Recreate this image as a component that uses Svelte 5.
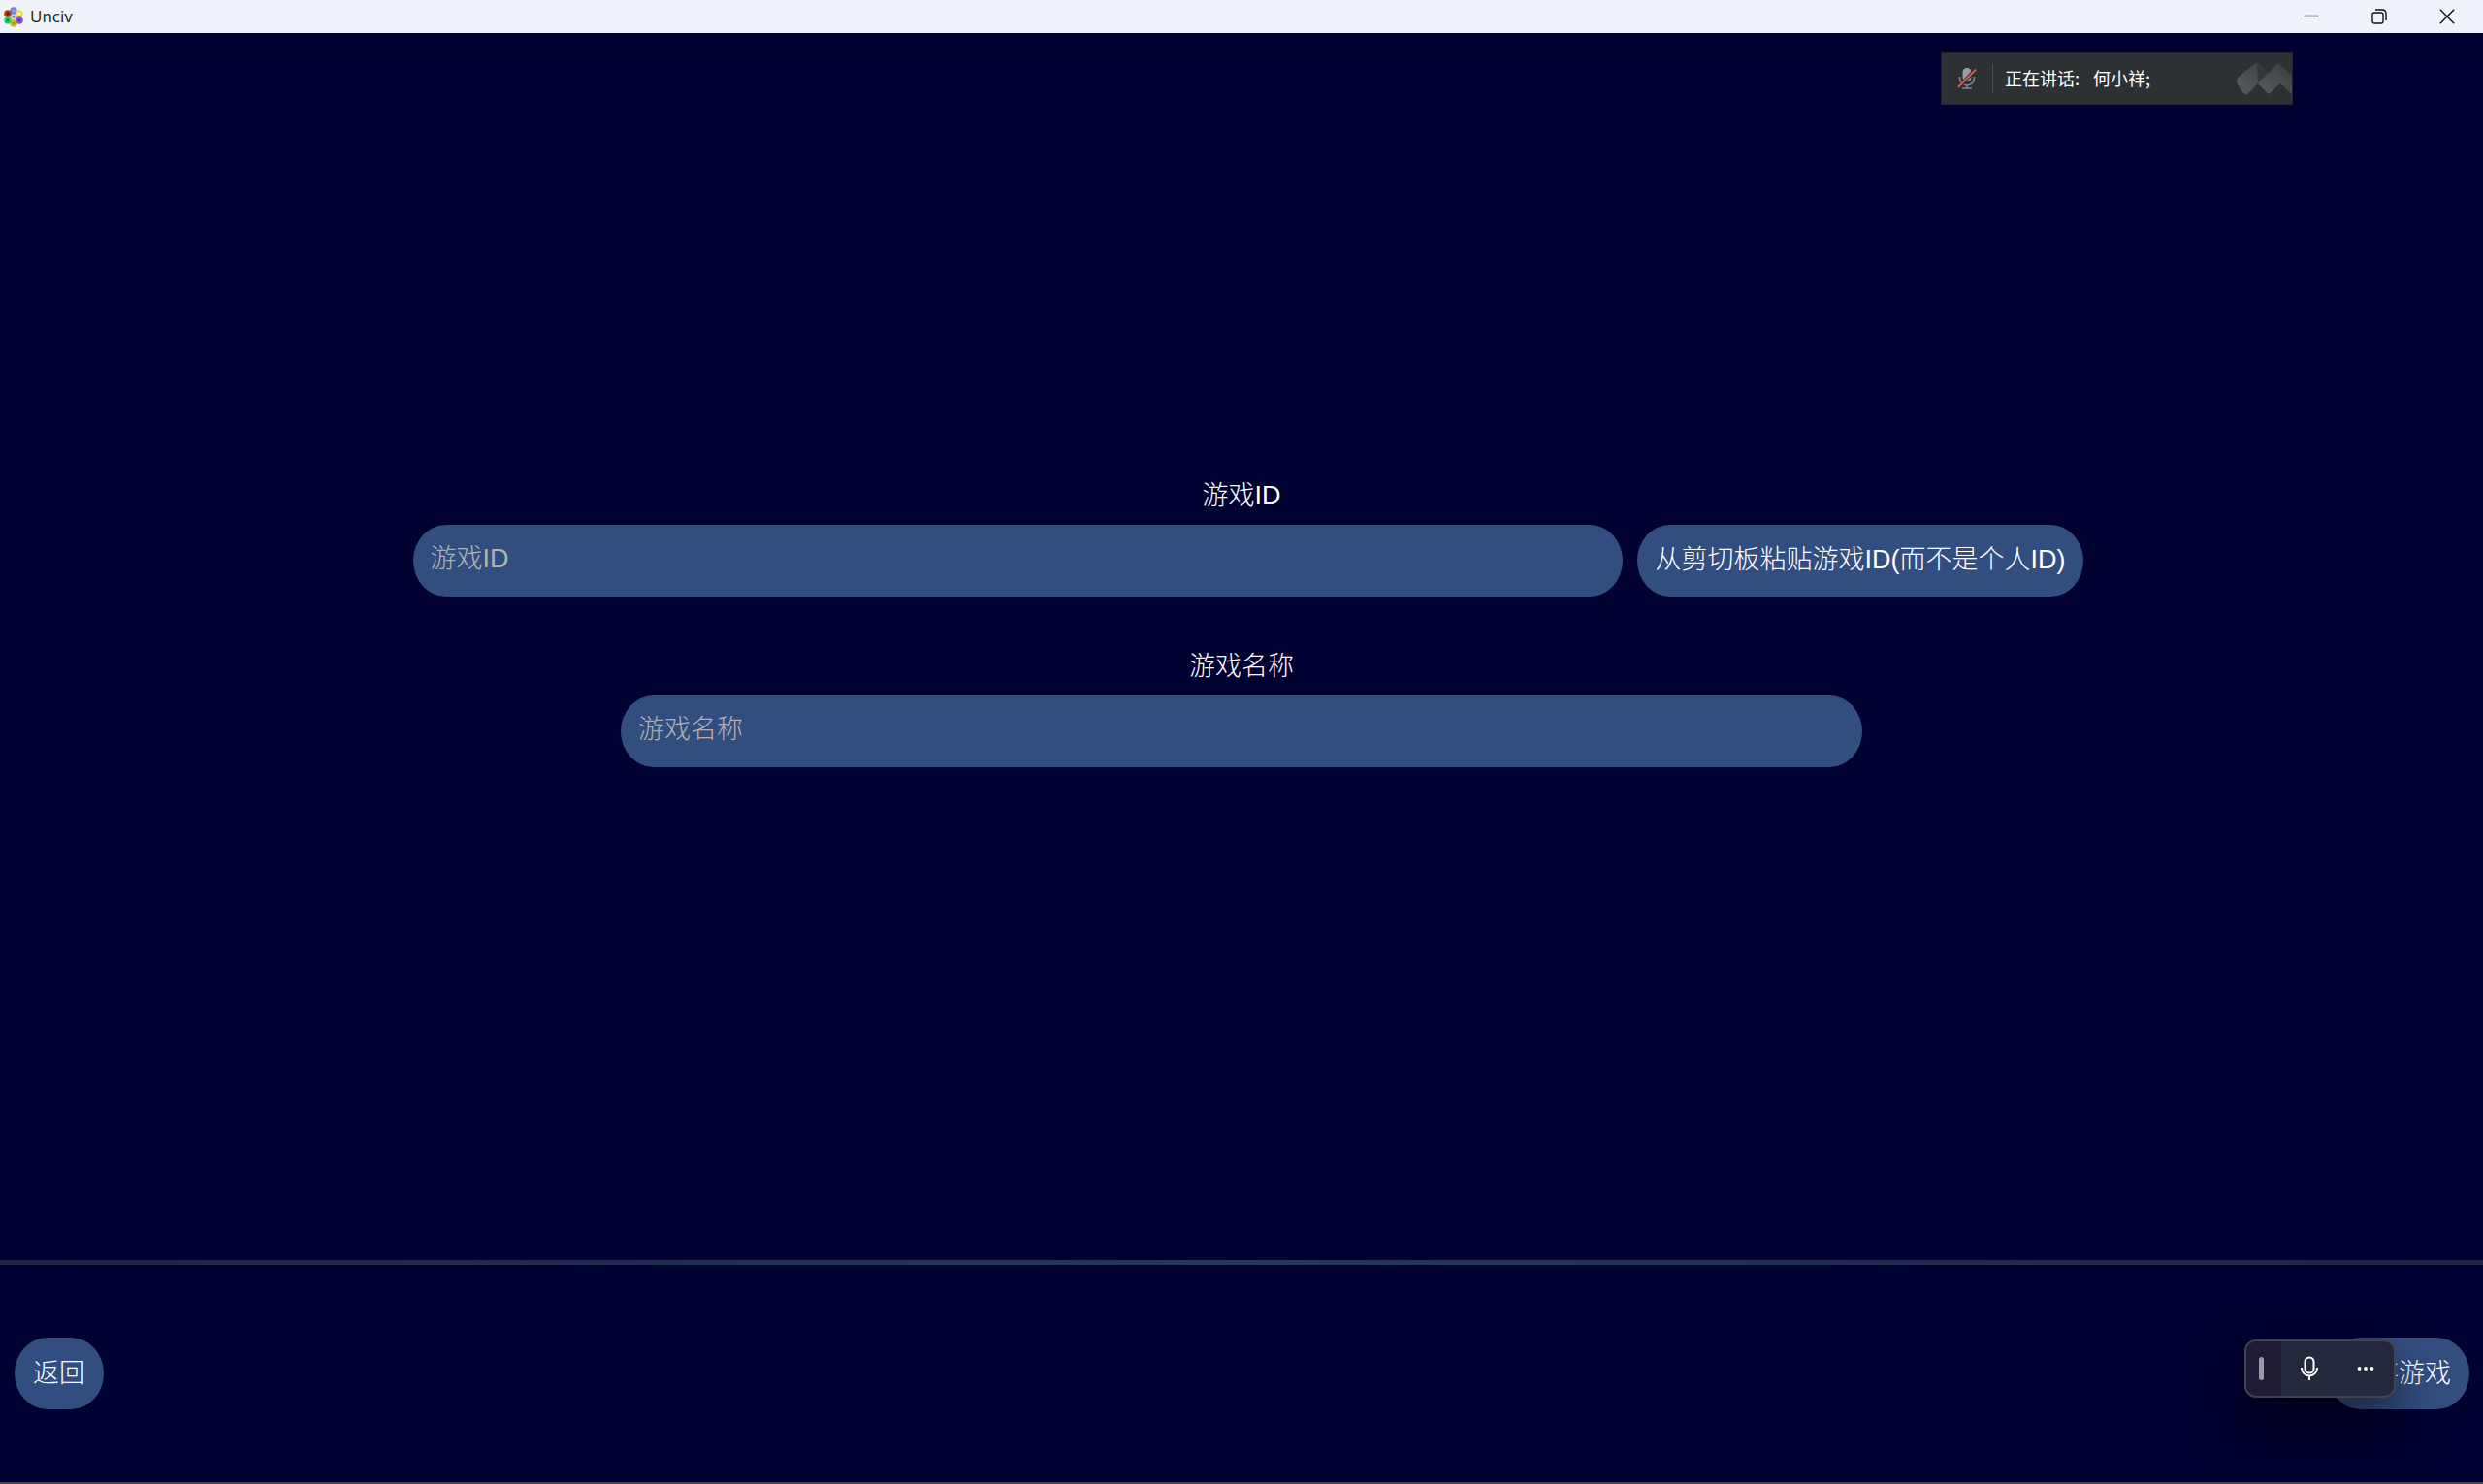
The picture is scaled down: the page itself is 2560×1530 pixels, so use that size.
<script lang="ts">
  let gameId = $state('');
  let gameName = $state('');

  // hexagon ring of the app icon: position and colours of each civ dot
  const dots = [
    { x: 10, y: 4, fill: '#7188e0', core: '#8fa2f0' },
    { x: 16, y: 7, fill: '#f0dc52', core: '#fff6a8' },
    { x: 16, y: 14, fill: '#7f55dc', core: '#5d37b8' },
    { x: 10, y: 17, fill: '#e0b51e', core: '#b8920c' },
    { x: 4, y: 14, fill: '#22d668', core: '#0d8a3c' },
    { x: 4, y: 7, fill: '#b0400e', core: '#6e2204' }
  ];

  async function pasteId() {
    gameId = await navigator.clipboard.readText();
  }
</script>

<div class="window">
  <header class="titlebar">
    <svg class="app-icon" viewBox="0 0 20 21" aria-hidden="true">
      <circle cx="10" cy="10.5" r="4" fill="#d4d4d8" />
      <circle cx="10" cy="10.5" r="1.4" fill="#8e8e96" />
      {#each dots as dot}
        <circle cx={dot.x} cy={dot.y} r="3.8" fill={dot.fill} />
        <circle cx={dot.x} cy={dot.y} r="1.6" fill={dot.core} />
      {/each}
    </svg>
    <span class="title">Unciv</span>
    <div class="window-buttons">
      <button aria-label="Minimize">
        <svg viewBox="0 0 16 16"><path d="M0.5 7.5H15.5" /></svg>
      </button>
      <button aria-label="Restore">
        <svg viewBox="0 0 16 16">
          <rect x="1" y="4" width="11" height="11" rx="2" />
          <path d="M4 1H11Q15 1 15 5V12" />
        </svg>
      </button>
      <button aria-label="Close">
        <svg viewBox="0 0 16 16"><path d="M0.8 0.8L15.2 15.2M15.2 0.8L0.8 15.2" /></svg>
      </button>
    </div>
  </header>

  <main class="form">
    <div class="field">
      <label for="game-id">游戏ID</label>
      <div class="id-row">
        <input id="game-id" class="id-input" type="text" placeholder="游戏ID" bind:value={gameId} />
        <button class="pill" onclick={pasteId}>从剪切板粘贴游戏ID(而不是个人ID)</button>
      </div>
    </div>
    <div class="field">
      <label for="game-name">游戏名称</label>
      <input id="game-name" class="name-input" type="text" placeholder="游戏名称" bind:value={gameName} />
    </div>
  </main>

  <footer class="actions">
    <button class="pill">返回</button>
    <button class="pill">保存游戏</button>
  </footer>

  <div class="speaking">
    <svg class="muted-mic" viewBox="0 0 20 24" aria-hidden="true">
      <rect x="5.5" y="1" width="9" height="14" rx="4.5" fill="#9a9da0" />
      <path d="M2.5 10V11.5A7.5 7.5 0 0 0 17.5 11.5V10M10 19V22M5 22H15" fill="none" stroke="#85888b" stroke-width="1.6" />
      <path d="M1 21.5L19 2.5" stroke="#2d3134" stroke-width="4" />
      <path d="M0.8 21L19.2 2.5" stroke="#e9584a" stroke-width="1.8" />
    </svg>
    <span class="speaker"><span>正在讲话:</span><span>何小祥;</span></span>
    <svg class="brand" viewBox="0 0 57 34" aria-hidden="true">
      <defs>
        <linearGradient id="brand-left" x1="0" y1="1" x2="1" y2="0">
          <stop offset="0" stop-color="#5a5c60" />
          <stop offset="1" stop-color="#3a3d40" />
        </linearGradient>
        <linearGradient id="brand-right" x1="0" y1="1" x2="1" y2="0">
          <stop offset="0" stop-color="#5a5c60" />
          <stop offset="1" stop-color="#393c3f" />
        </linearGradient>
      </defs>
      <path d="M2 15L21 0L35 13L22 22L11 33Q9 34 7 32L1 23Q-1 18 2 15Z" fill="url(#brand-left)" />
      <path d="M21 0L35 13L22 22Z" fill="#36393c" />
      <path d="M22 22L43 1L57 13V33L45 22L33 33Z" fill="url(#brand-right)" />
    </svg>
  </div>

  <div class="voice-bar">
    <div class="grip"><span></span></div>
    <button aria-label="语音输入">
      <svg viewBox="0 0 20 26">
        <rect x="5.5" y="1.5" width="9" height="16" rx="4.5" />
        <path d="M2 12V12.5A8 8 0 0 0 18 12.5V12M10 20.5V25" />
      </svg>
    </button>
    <button aria-label="更多">
      <svg class="more" viewBox="0 0 20 26">
        <circle cx="3.5" cy="13" r="1.9" />
        <circle cx="10" cy="13" r="1.9" />
        <circle cx="16.5" cy="13" r="1.9" />
      </svg>
    </button>
  </div>
</div>

<style>
  :global(body) {
    margin: 0;
    background: #000031;
  }

  .window {
    position: relative;
    box-sizing: border-box;
    display: flex;
    flex-direction: column;
    min-height: 100vh;
    border-bottom: 2px solid #44454c;
    background: #000031;
    color: #fff;
    font-family: "Liberation Sans", "Noto Sans CJK SC", sans-serif;
    font-size: 27px;
    font-weight: 300;
    overflow: hidden;
  }

  button,
  input {
    border: 0;
    font: inherit;
    color: inherit;
  }

  button {
    padding: 0;
    background: none;
  }

  .titlebar {
    display: flex;
    align-items: center;
    height: 34px;
    padding: 0 2px 0 4px;
    background: #f0f3fa;
    color: #1a1a1a;
  }

  .app-icon {
    width: 20px;
    height: 21px;
  }

  .title {
    margin-left: 7px;
    font-family: "Open Sans", "Noto Sans", sans-serif;
    font-size: 17px;
    font-weight: 400;
    line-height: 34px;
  }

  .window-buttons {
    display: flex;
    margin-left: auto;
  }

  .window-buttons button {
    display: flex;
    align-items: center;
    justify-content: center;
    width: 70px;
    height: 34px;
  }

  .window-buttons svg {
    width: 16px;
    height: 16px;
    fill: none;
    stroke: #111;
    stroke-width: 1.4;
  }

  .form {
    flex: 1;
    display: flex;
    flex-direction: column;
    justify-content: center;
  }

  .field {
    display: flex;
    flex-direction: column;
    align-items: center;
    gap: 10px;
    padding-bottom: 52px;
  }

  .field label {
    line-height: 40px;
  }

  .id-row {
    display: flex;
    gap: 15px;
    padding-left: 14px;
  }

  .id-input,
  .name-input,
  .pill {
    box-sizing: border-box;
    height: 74px;
    padding: 0 18px 2px;
    border-radius: 34px / 37px;
    background: #324d7f;
    white-space: nowrap;
  }

  .pill {
    padding: 0 19px 6px;
  }

  .id-input {
    width: calc(50vw - 33px);
  }

  .name-input {
    width: 50vw;
  }

  input::placeholder {
    color: #b2b2b2;
    opacity: 1;
  }

  .actions {
    display: flex;
    justify-content: space-between;
    padding: 75px 14px 75px 15px;
    border-top: 5px solid;
    border-image: linear-gradient(90deg, #1a2640, #24395a 50%, #1a2640) 1;
  }

  /* overlay windows of the meeting and dictation apps */
  .speaking {
    position: absolute;
    top: 54px;
    right: 196px;
    box-sizing: border-box;
    display: flex;
    align-items: center;
    width: 363px;
    height: 54px;
    padding-left: 16px;
    border: 1px solid #222527;
    background: #2d3134;
    font-family: "Noto Sans CJK SC", sans-serif;
    font-size: 18px;
    font-weight: 400;
  }

  .muted-mic {
    width: 20px;
    height: 24px;
  }

  .speaker {
    display: flex;
    gap: 14px;
    margin-left: 16px;
    padding-left: 12px;
    border-left: 1px solid #4b4f52;
    line-height: 28px;
    padding-bottom: 2px;
  }

  .brand {
    width: 57px;
    height: 34px;
    margin-left: auto;
  }

  .voice-bar {
    position: absolute;
    right: 90px;
    bottom: 87px;
    box-sizing: border-box;
    display: flex;
    width: 156px;
    height: 60px;
    border: 2px solid #41454f;
    border-radius: 12px;
    background: #24283d;
    box-shadow: 0 24px 48px rgba(0, 0, 0, 0.5);
    overflow: hidden;
  }

  .grip {
    display: flex;
    align-items: center;
    justify-content: center;
    width: 36px;
    background: #1e1d35;
  }

  .grip span {
    width: 5px;
    height: 24px;
    margin-right: 5px;
    border-radius: 3px;
    background: #9a98a5;
  }

  .voice-bar button {
    display: flex;
    flex: 1;
    align-items: center;
    justify-content: center;
  }

  .voice-bar svg {
    width: 20px;
    height: 26px;
    fill: none;
    stroke: #fff;
    stroke-width: 2;
  }

  .voice-bar .more {
    fill: #fff;
    stroke: none;
  }
</style>
